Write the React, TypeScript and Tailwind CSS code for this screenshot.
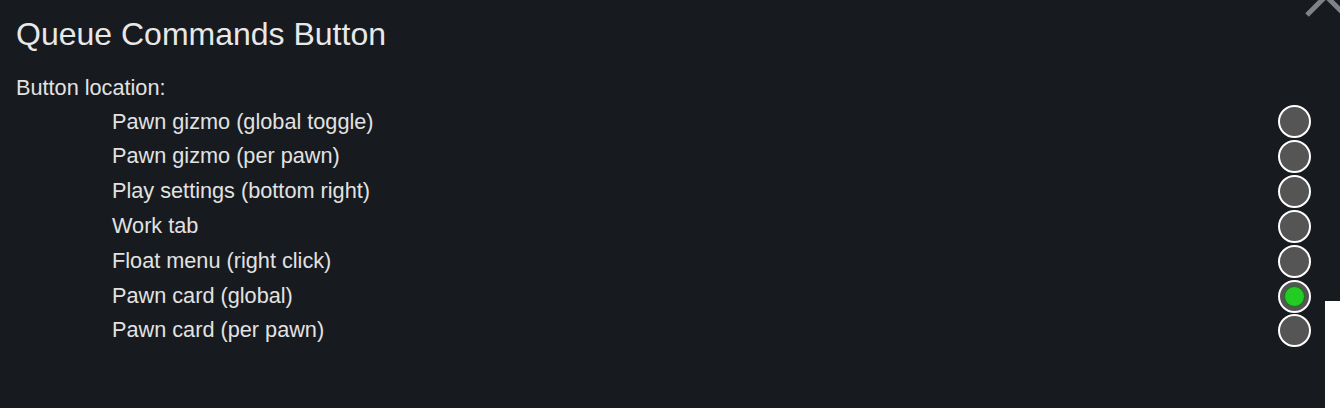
const options = [
  'Pawn gizmo (global toggle)',
  'Pawn gizmo (per pawn)',
  'Play settings (bottom right)',
  'Work tab',
  'Float menu (right click)',
  'Pawn card (global)',
  'Pawn card (per pawn)',
];

function Radio({ checked }: { checked: boolean }) {
  return (
    <div className="flex h-[33px] w-[33px] items-center justify-center rounded-full border-[2.5px] border-white bg-[#555555]">
      {checked && (
        <div className="h-[21px] w-[21px] rounded-full border border-[#1c6e1c] bg-[#22cc22]" />
      )}
    </div>
  );
}

export default function App() {
  const selected = 5;

  return (
    <div
      className="relative h-[408px] w-[1340px] overflow-hidden bg-[#171a1f] text-[#e2e2e2]"
      style={{ fontFamily: '"Liberation Sans", Arial, sans-serif' }}
    >
      {/* close button, mostly off-screen */}
      <svg className="absolute right-0 top-0 h-[17px] w-[35px]" viewBox="0 0 35 17">
        <path d="M2 15 L21 -4 M21 -4 L40 15" stroke="#7f8286" strokeWidth="5" fill="none" />
      </svg>

      <div className="pl-4 pr-[29px] pt-[14px]">
        <h1 className="h-[40px] text-[32px] leading-[40px] text-[#e8e8e8]">Queue Commands Button</h1>
        <div className="mt-[15.5px] h-[35px] text-[21.7px] leading-[35px]">Button location:</div>
        <div className="flex flex-col">
          {options.map((label, i) => (
            <div key={label} className="flex h-[34.83px] items-center justify-between pl-[96px]">
              <span className="text-[21.7px] leading-[34.83px]">{label}</span>
              <Radio checked={i === selected} />
            </div>
          ))}
        </div>
      </div>

      {/* edge of another window */}
      <div className="absolute bottom-0 right-0 h-[107px] w-[15px] bg-white" />
    </div>
  );
}
